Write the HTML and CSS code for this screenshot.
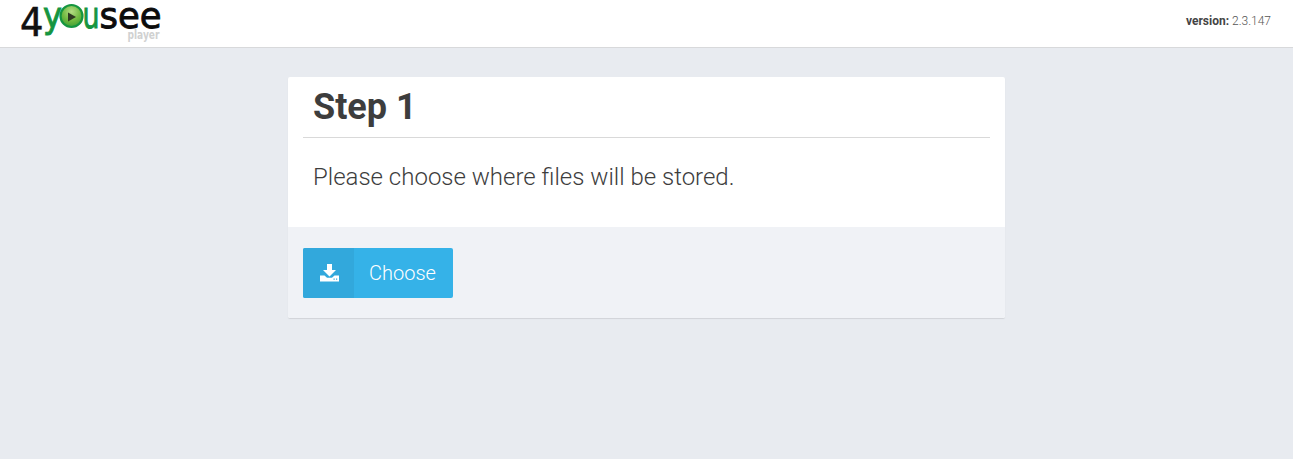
FILE: index.html
```html
<!DOCTYPE html>
<html lang="en">
<head>
<meta charset="utf-8">
<title>4YouSee Player</title>
<link rel="stylesheet" href="styles.css">
</head>
<body>
<header class="topbar">
  <svg class="logo" width="145" height="45" viewBox="0 0 145 45" aria-label="4YouSee player">
    <defs>
      <radialGradient id="ball" cx="50%" cy="30%" r="70%">
        <stop offset="0" stop-color="#b4dc84"/>
        <stop offset="0.6" stop-color="#6fb93f"/>
        <stop offset="1" stop-color="#3f9f35"/>
      </radialGradient>
    </defs>
    <text class="logo-four" x="0" y="36" textLength="23.500" lengthAdjust="spacingAndGlyphs">4</text>
    <text class="logo-green" x="23" y="28" textLength="19" lengthAdjust="spacingAndGlyphs">y</text>
    <circle cx="51.500" cy="16" r="11" fill="url(#ball)" stroke="#159540" stroke-width="2.200"/>
    <path d="M48 12.500 L56 17 L48 21.500 Z" fill="#2f3a22"/>
    <text class="logo-green" x="62.500" y="28" textLength="17" lengthAdjust="spacingAndGlyphs">u</text>
    <text class="logo-see" x="79.500" y="28" textLength="62" lengthAdjust="spacingAndGlyphs">see</text>
    <text class="logo-player" x="107.500" y="39" textLength="32" lengthAdjust="spacingAndGlyphs">player</text>
  </svg>
  <div class="version"><b>version:</b> 2.3.147</div>
</header>
<main class="page">
  <section class="card">
    <div class="card-body">
      <h1 class="title">Step 1</h1>
      <p class="lead">Please choose where files will be stored.</p>
    </div>
    <div class="card-footer">
      <button class="btn" type="button">
        <span class="btn-icon">
          <svg width="19" height="18" viewBox="0 0 19 18">
            <path fill="#fff" d="M7 0 H12 V6 H16 L9.500 12.500 L3 6 H7 Z"/>
            <path fill="#fff" fill-rule="evenodd" d="M0 11.500 H4.500 L7 13.800 H12 L14.500 11.500 H19 V17.500 H0 Z M13.500 14.500 V15.700 H14.700 V14.500 Z M16 14.500 V15.700 H17.200 V14.500 Z"/>
          </svg>
        </span>
        <span class="btn-label">Choose</span>
      </button>
    </div>
  </section>
</main>
</body>
</html>
```
FILE: styles.css
```css
* { box-sizing: border-box; }
html, body { height: 100%; }
body {
  margin: 0;
  background: #e8ebf0;
  font-family: Roboto, "Liberation Sans", sans-serif;
  color: #3d3d3d;
  overflow: hidden;
}
.topbar {
  height: 48px;
  background: #fff;
  border-bottom: 1px solid #d8d9db;
  display: flex;
  justify-content: space-between;
  align-items: flex-start;
  padding: 0 22px 0 20px;
}
.logo { display: block; flex: none; }
.logo text { font-family: "DejaVu Sans", sans-serif; }
.logo-four { font-size: 39px; fill: #111; stroke: #111; stroke-width: .6px; }
.logo-green { font-size: 36px; fill: #159540; stroke: #159540; stroke-width: .9px; }
.logo-see { font-size: 36px; fill: #0c0c0c; stroke: #0c0c0c; stroke-width: .9px; }
.logo-player { font-size: 12px; font-weight: 700; fill: #d0d1d1; }
.version {
  font-size: 12px;
  font-weight: 300;
  line-height: 14px;
  margin-top: 14px;
  color: #555;
}
.version b { font-weight: 700; color: #444; }
.page {
  display: flex;
  justify-content: center;
  padding-top: 29px;
}
.card {
  width: 717px;
  background: #fff;
  border-radius: 2px;
  box-shadow: 0 1px 1px rgba(0, 0, 0, .1);
  overflow: hidden;
}
.card-body {
  height: 150px;
  padding: 0 15px;
}
.title {
  margin: 0;
  height: 61px;
  padding: 9px 10px 0;
  font-size: 36px;
  line-height: 42px;
  font-weight: 700;
  color: #3d3d3d;
  border-bottom: 1px solid #d9d9d9;
}
.lead {
  margin: 0;
  padding: 24px 10px 0;
  font-size: 24px;
  line-height: 30px;
  font-weight: 300;
  color: #3d3d3d;
}
.card-footer {
  height: 91px;
  background: #f0f2f6;
  padding: 21px 15px;
}
.btn {
  display: flex;
  align-items: stretch;
  width: 150px;
  height: 50px;
  padding: 0;
  border: 0;
  border-radius: 2px;
  background: #35b2e8;
  color: #fff;
  font-family: inherit;
  overflow: hidden;
}
.btn-icon {
  width: 51px;
  background: #32a8dc;
  display: flex;
  align-items: center;
  justify-content: center;
  padding-bottom: 1px;
  padding-left: 2px;
}
.btn-label {
  flex: 1;
  font-size: 20px;
  font-weight: 300;
  line-height: 50px;
  text-align: left;
  padding-left: 15px;
}
```
